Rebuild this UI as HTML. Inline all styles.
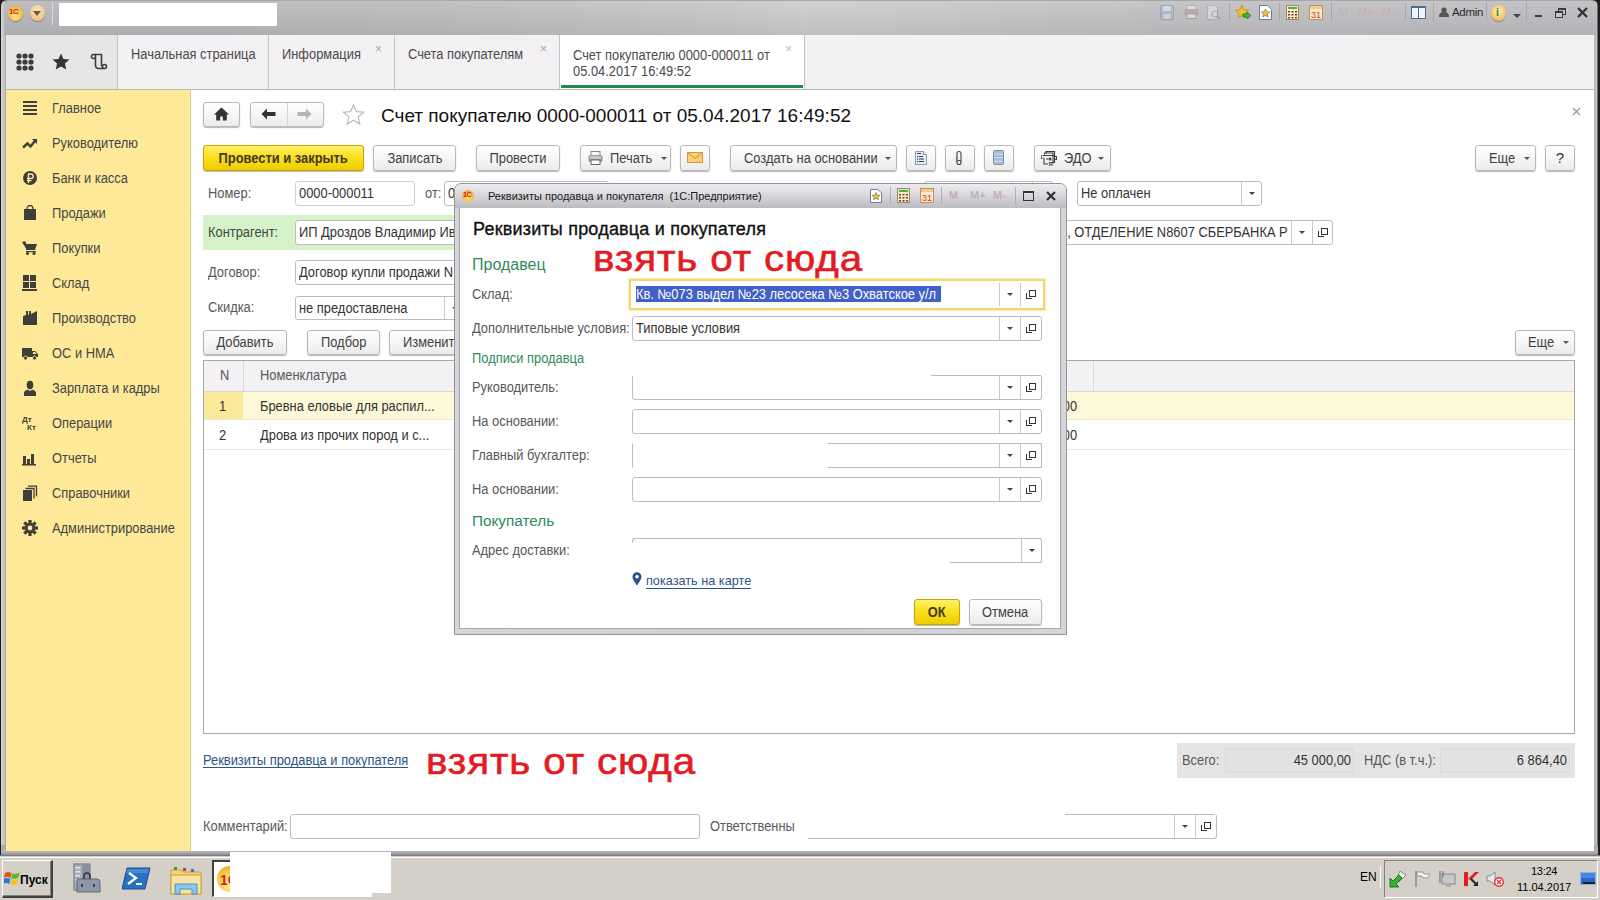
<!DOCTYPE html>
<html><head><meta charset="utf-8">
<style>
*,*:before,*:after{box-sizing:border-box;margin:0;padding:0}
html,body{width:1600px;height:900px;overflow:hidden;background:#1e1e1e;font-family:"Liberation Sans",sans-serif;font-size:13px;color:#333}
.a{position:absolute}
.t{position:absolute;white-space:nowrap;line-height:15px}
.btn{position:absolute;border:1px solid #b9b9b9;border-radius:3px;background:linear-gradient(#ffffff,#f4f4f4 60%,#ebebeb);box-shadow:0 1px 1px rgba(0,0,0,.28);color:#404040;text-align:center;white-space:nowrap;line-height:22px}
.inp{position:absolute;border:1px solid #bdbdbd;border-radius:3px;background:#fff;white-space:nowrap;line-height:22px;padding-left:3px;color:#333}
.dd{position:absolute;top:0;bottom:0;border-left:1px solid #c8c8c8;width:21px}
.dd:after{content:"";position:absolute;left:7px;top:10px;border-left:3.5px solid transparent;border-right:3.5px solid transparent;border-top:3.5px solid #444}
.op{position:absolute;top:0;bottom:0;border-left:1px solid #c8c8c8;width:21px}
.op:after{content:"";position:absolute;left:8px;top:7px;width:7px;height:7px;border:1.4px solid #333;background:#fff}
.op:before{content:"";position:absolute;left:5px;top:10px;width:6px;height:6px;border-left:1.4px solid #333;border-bottom:1.4px solid #333}
.lbl{position:absolute;white-space:nowrap;color:#585858;line-height:15px}
.x{font-size:14px;transform:scaleX(.92);transform-origin:0 50%}
.xr{font-size:14px;transform:scaleX(.92);transform-origin:100% 50%}
.s{display:inline-block;font-size:14px;transform:scaleX(.92);transform-origin:0 50%}
.sc{display:inline-block;font-size:14px;transform:scaleX(.92);transform-origin:50% 50%}
</style></head><body>
<!-- window frame -->
<div class="a" style="left:1px;top:0;width:1597px;height:857px;background:linear-gradient(90deg,#d0d0d4 0 2px,#c4c4c4 2px 4px,#a8a8a8 4px 1593px,#b8b8b8 1593px 1595px,#c8c8cc 1595px 1596px,#707070 1596px);border-radius:6px 6px 0 0"></div>
<div class="a" style="left:1px;top:845px;width:1597px;height:10px;background:linear-gradient(#a8a8ac,#b4b4b8 70%,#8c8c90)"></div>
<!-- title bar -->
<div class="a" id="titlebar" style="left:4px;top:1px;width:1593px;height:34px;border-radius:6px 6px 0 0;background:linear-gradient(rgba(255,255,255,.05),rgba(0,0,0,.07)),linear-gradient(90deg,#bababe 0%,#bdbdc0 25%,#c8c8cb 44%,#cecece 50%,#cbcbce 58%,#c4c4c7 68%,#c2c2c6 80%,#c0c0c4 100%)"></div>
<div class="a" style="left:59px;top:3px;width:218px;height:23px;background:#fff"></div>

<!-- tabs bar -->
<div class="a" style="left:6px;top:35px;width:1588px;height:55px;background:#f3f1f3;border-bottom:1px solid #b8b8b8"></div>
<div class="a" style="left:6px;top:35px;width:112px;height:54px;background:#e6e6e6;border-right:1px solid #c4c4c4"></div>


<!-- title bar icons -->
<div class="a" style="left:8px;top:6px;width:15px;height:15px;border-radius:50%;background:radial-gradient(circle at 50% 65%,#ffe680,#f3b640 70%,#d89a30);box-shadow:0 1px 1px rgba(0,0,0,.3)"></div>
<div class="t" style="left:9px;top:7px;font:bold 8px 'Liberation Sans';color:#d0201a;letter-spacing:-0.5px">1C</div>
<div class="a" style="left:30px;top:5px;width:15px;height:16px;border-radius:50%;background:radial-gradient(circle at 50% 35%,#fde4c0,#eec08a 75%,#c99a60);box-shadow:0 1px 1px rgba(0,0,0,.3)"></div>
<div class="a" style="left:33px;top:11px;border-left:4.5px solid transparent;border-right:4.5px solid transparent;border-top:5px solid #6b5a40"></div>
<div class="a" style="left:52px;top:3px;width:1px;height:22px;background:#b0b0b4;border-right:1px solid #dadade"></div>
<!-- faded icons -->
<svg class="a" style="left:1160px;top:5px;opacity:.55" width="14" height="15" viewBox="0 0 14 15"><rect x=".5" y=".5" width="13" height="14" rx="1" fill="#9fb4d0" stroke="#7a90b0"/><rect x="3" y="1" width="8" height="5" fill="#e8eef6"/><rect x="3.5" y="9" width="7" height="5" fill="#d8e0ea"/></svg>
<svg class="a" style="left:1184px;top:5px;opacity:.45" width="15" height="14" viewBox="0 0 15 14"><rect x="3" y=".5" width="9" height="4" fill="#fff" stroke="#999"/><rect x=".5" y="4" width="14" height="7" rx="1.5" fill="#b09090"/><rect x="3" y="9" width="9" height="4.5" fill="#fff" stroke="#888"/></svg>
<svg class="a" style="left:1207px;top:5px;opacity:.45" width="14" height="15" viewBox="0 0 14 15"><path d="M.5.5h7l3 3v11H.5z" fill="#eef0f4" stroke="#9aa0b0"/><circle cx="8" cy="9" r="3" fill="none" stroke="#8a8a9a" stroke-width="1.2"/><path d="M10 11l3 3" stroke="#8a6a6a" stroke-width="1.5"/></svg>
<div class="a" style="left:1229px;top:3px;width:1px;height:18px;background:#a8a8ac"></div>
<svg class="a" style="left:1235px;top:5px" width="17" height="16" viewBox="0 0 17 16"><path d="M7 0.5l2 4.2 4.5.5-3.4 3 1 4.5L7 10.5 3 12.7l1-4.5L0.5 5.2 5 4.7z" fill="#f4c430" stroke="#b88a10" stroke-width=".8"/><path d="M8 9h4V7l4 3.5-4 3.5v-2H8z" fill="#3ab83a" stroke="#1e7a1e" stroke-width=".8"/></svg>
<svg class="a" style="left:1259px;top:5px" width="13" height="15" viewBox="0 0 13 15"><path d="M.5.5h8l4 4v10H.5z" fill="#fff" stroke="#6a7ca0"/><path d="M6.5 4l1.3 2.7 2.9.3-2.2 2 .7 2.9-2.7-1.5-2.7 1.5.7-2.9-2.2-2 2.9-.3z" fill="#f0c040" stroke="#806020" stroke-width=".6"/></svg>
<div class="a" style="left:1279px;top:3px;width:1px;height:18px;background:#a8a8ac"></div>
<svg class="a" style="left:1286px;top:5px" width="13" height="15" viewBox="0 0 13 15"><rect x=".5" y=".5" width="12" height="14" fill="#fbe9c0" stroke="#a08860"/><rect x="2" y="2" width="9" height="2" fill="#4caf50"/><g fill="#5a4a30"><rect x="2" y="6" width="2" height="1.5"/><rect x="5.5" y="6" width="2" height="1.5"/><rect x="9" y="6" width="2" height="1.5"/><rect x="2" y="9" width="2" height="1.5"/><rect x="5.5" y="9" width="2" height="1.5"/><rect x="9" y="9" width="2" height="1.5"/><rect x="2" y="12" width="2" height="1.5"/><rect x="5.5" y="12" width="2" height="1.5"/><rect x="9" y="12" width="2" height="1.5"/></g></svg>
<svg class="a" style="left:1309px;top:5px" width="14" height="15" viewBox="0 0 14 15"><rect x=".5" y=".5" width="13" height="14" fill="#fbe9c8" stroke="#c09060"/><rect x="1" y="1" width="12" height="3" fill="#f0c890"/><text x="2" y="13" font-family="Liberation Sans" font-size="9" fill="#d04020">31</text></svg>
<div class="a" style="left:1331px;top:3px;width:1px;height:18px;background:#a8a8ac"></div>
<div class="t" style="left:1339px;top:6px;font:bold 11px 'Liberation Sans';color:#c4b4b4">M</div>
<div class="t" style="left:1358px;top:6px;font:bold 11px 'Liberation Sans';color:#c4b4b4">M+</div>
<div class="t" style="left:1382px;top:6px;font:bold 11px 'Liberation Sans';color:#c4b4b4">M-</div>
<div class="a" style="left:1405px;top:3px;width:1px;height:18px;background:#a8a8ac"></div>
<div class="a" style="left:1411px;top:6px;width:15px;height:13px;border:1.5px solid #4a6a98;border-top-width:2px;background:linear-gradient(90deg,#f0f4fa 44%,#4a6a98 44%,#4a6a98 56%,#f0f4fa 56%)"></div>
<div class="a" style="left:1433px;top:3px;width:1px;height:18px;background:#a8a8ac"></div>
<svg class="a" style="left:1439px;top:7px" width="10" height="10" viewBox="0 0 10 10"><circle cx="5" cy="3" r="2.6" fill="#555"/><path d="M0 10c0-4 2-5 5-5s5 1 5 5z" fill="#555"/></svg>
<div class="t" style="left:1452px;top:6px;font:11.5px 'Liberation Sans';color:#2a2a2a;letter-spacing:-0.3px">Admin</div>
<div class="a" style="left:1486px;top:3px;width:1px;height:18px;background:#a8a8ac"></div>
<div class="a" style="left:1491px;top:5px;width:15px;height:16px;border-radius:50%;background:radial-gradient(circle at 50% 40%,#fff0c0,#f0c060 70%,#c89030);box-shadow:0 1px 1px rgba(0,0,0,.3)"></div>
<div class="t" style="left:1496px;top:6px;font:bold 11px 'Liberation Sans';color:#3a8a10">i</div>
<div class="a" style="left:1513px;top:14px;border-left:4px solid transparent;border-right:4px solid transparent;border-top:4px solid #444"></div>
<div class="a" style="left:1526px;top:3px;width:1px;height:18px;background:#a8a8ac"></div>
<div class="a" style="left:1535px;top:15px;width:7px;height:2px;background:#3a3a3a"></div>
<div class="a" style="left:1558px;top:8px;width:8px;height:7px;border:1.5px solid #3a3a3a;border-top-width:2.5px"></div>
<div class="a" style="left:1555px;top:11px;width:8px;height:7px;border:1.5px solid #3a3a3a;border-top-width:2.5px;background:#c6c6ca"></div>
<svg class="a" style="left:1577px;top:7px" width="11" height="11" viewBox="0 0 11 11"><path d="M1 1L10 10M10 1L1 10" stroke="#333" stroke-width="2.4"/></svg>

<!-- tabs icons -->
<svg class="a" style="left:16px;top:53px" width="18" height="18" viewBox="0 0 18 18"><g fill="#3c3c3c"><circle cx="3" cy="3" r="2.6"/><circle cx="9" cy="3" r="2.6"/><circle cx="15" cy="3" r="2.6"/><circle cx="3" cy="9" r="2.6"/><circle cx="9" cy="9" r="2.6"/><circle cx="15" cy="9" r="2.6"/><circle cx="3" cy="15" r="2.6"/><circle cx="9" cy="15" r="2.6"/><circle cx="15" cy="15" r="2.6"/></g></svg>
<svg class="a" style="left:52px;top:53px" width="18" height="17" viewBox="0 0 18 17"><path d="M9 0.5l2.5 5.6 6 .5-4.6 4 1.4 6L9 13.4 3.7 16.6l1.4-6-4.6-4 6-.5z" fill="#333"/></svg>
<svg class="a" style="left:90px;top:53px" width="18" height="18" viewBox="0 0 18 18"><g fill="none" stroke="#3c3c3c" stroke-width="1.6"><path d="M3.5 1.5h8v12"/><circle cx="3.5" cy="3.5" r="2" fill="#fff"/><path d="M5.5 4.5v8a3 3 0 0 0 3 3h6"/><circle cx="14.5" cy="13.5" r="2" fill="#fff"/></g></svg>

<!-- tabs -->
<div class="a" style="left:268px;top:35px;width:1px;height:54px;background:#c4c4c4"></div>
<div class="a" style="left:394px;top:35px;width:1px;height:54px;background:#c4c4c4"></div>
<div class="a" style="left:559px;top:35px;width:246px;height:54px;background:#fff;border-left:1px solid #c4c4c4;border-right:1px solid #c4c4c4"></div>
<div class="a" style="left:561px;top:85px;width:242px;height:3px;background:#1d8a4e"></div>
<div class="t x" style="left:131px;top:47px;color:#4a4a4a">Начальная страница</div>
<div class="t x" style="left:282px;top:47px;color:#4a4a4a">Информация</div>
<div class="t x" style="left:408px;top:47px;color:#4a4a4a">Счета покупателям</div>
<div class="t x" style="left:573px;top:47px;color:#4a4a4a;line-height:16px">Счет покупателю 0000-000011 от<br>05.04.2017 16:49:52</div>
<div class="t" style="left:375px;top:42px;color:#a8a8a8;font-size:12px">×</div>
<div class="t" style="left:540px;top:42px;color:#a8a8a8;font-size:12px">×</div>
<div class="t" style="left:785px;top:42px;color:#c0c0c0;font-size:12px">×</div>

<!-- sidebar -->
<div class="a" style="left:6px;top:90px;width:185px;height:761px;background:#fee998;border-right:1px solid #d8c888"></div>
<svg class="a" style="left:22px;top:100px" width="16" height="16" viewBox="0 0 16 16"><g fill="#3f3f3a"><rect x="1" y="1" width="14" height="2"/><rect x="1" y="5" width="14" height="2"/><rect x="1" y="9" width="14" height="2"/><rect x="1" y="13" width="14" height="2"/></g></svg>
<div class="t x" style="left:52px;top:101px;color:#464646">Главное</div>
<svg class="a" style="left:22px;top:135px" width="16" height="16" viewBox="0 0 16 16"><path d="M1 12.5l4.5-4 3 3L13 6" fill="none" stroke="#3f3f3a" stroke-width="2.4"/><path d="M10 4h5v5z" fill="#3f3f3a"/></svg>
<div class="t x" style="left:52px;top:136px;color:#464646">Руководителю</div>
<svg class="a" style="left:22px;top:170px" width="16" height="16" viewBox="0 0 16 16"><circle cx="8" cy="8" r="7" fill="#3f3f3a"/><path d="M6.5 13V4h2.5a2.2 2.2 0 0 1 0 4.4H5 M5 10.5h4.5" fill="none" stroke="#fee998" stroke-width="1.4"/></svg>
<div class="t x" style="left:52px;top:171px;color:#464646">Банк и касса</div>
<svg class="a" style="left:22px;top:205px" width="16" height="16" viewBox="0 0 16 16"><path d="M2 4h12v11H2z" fill="#3f3f3a"/><path d="M5 6V3.5a3 3 0 0 1 6 0V6" fill="none" stroke="#3f3f3a" stroke-width="1.3"/></svg>
<div class="t x" style="left:52px;top:206px;color:#464646">Продажи</div>
<svg class="a" style="left:22px;top:240px" width="16" height="16" viewBox="0 0 16 16"><path d="M0 2h3l1 2h11l-2 6H5z" fill="#3f3f3a"/><path d="M1 2.2h2.2L5 10" fill="none" stroke="#3f3f3a" stroke-width="1.3"/><rect x="4" y="11" width="10" height="1.2" fill="#3f3f3a"/><circle cx="5.5" cy="13.5" r="1.6" fill="#3f3f3a"/><circle cx="12" cy="13.5" r="1.6" fill="#3f3f3a"/></svg>
<div class="t x" style="left:52px;top:241px;color:#464646">Покупки</div>
<svg class="a" style="left:22px;top:275px" width="16" height="16" viewBox="0 0 16 16"><g fill="#3f3f3a"><rect x="1" y="0" width="6" height="6"/><rect x="8" y="0" width="6" height="6"/><rect x="1" y="7" width="6" height="6"/><rect x="8" y="7" width="6" height="6"/><rect x="0" y="14" width="15" height="2"/></g></svg>
<div class="t x" style="left:52px;top:276px;color:#464646">Склад</div>
<svg class="a" style="left:22px;top:310px" width="16" height="16" viewBox="0 0 16 16"><path d="M1 15V6l3-1V1h2v4l1-.5V1h2v3l6-3v14z" fill="#3f3f3a"/></svg>
<div class="t x" style="left:52px;top:311px;color:#464646">Производство</div>
<svg class="a" style="left:22px;top:345px" width="16" height="16" viewBox="0 0 16 16"><path d="M0 3h10v9H0z M10 6h3l3 3v3h-6z" fill="#3f3f3a"/><path d="M11 7h2l1.5 2H11z" fill="#fee998"/><circle cx="3.5" cy="13" r="2" fill="#3f3f3a" stroke="#fee998" stroke-width=".8"/><circle cx="12.5" cy="13" r="2" fill="#3f3f3a" stroke="#fee998" stroke-width=".8"/></svg>
<div class="t x" style="left:52px;top:346px;color:#464646">ОС и НМА</div>
<svg class="a" style="left:22px;top:380px" width="16" height="16" viewBox="0 0 16 16"><ellipse cx="8" cy="5" rx="3.3" ry="4.3" fill="#3f3f3a"/><path d="M2 16v-3c0-2 2-3 4-3.3l2 1.3 2-1.3c2 .3 4 1.3 4 3.3v3z" fill="#3f3f3a"/></svg>
<div class="t x" style="left:52px;top:381px;color:#464646">Зарплата и кадры</div>
<svg class="a" style="left:22px;top:415px" width="16" height="16" viewBox="0 0 16 16"><text x="0" y="7" font-family="Liberation Sans" font-weight="bold" font-size="8" fill="#3f3f3a">Дт</text><text x="5" y="15" font-family="Liberation Sans" font-weight="bold" font-size="8" fill="#3f3f3a">Кт</text></svg>
<div class="t x" style="left:52px;top:416px;color:#464646">Операции</div>
<svg class="a" style="left:22px;top:450px" width="16" height="16" viewBox="0 0 16 16"><g fill="#3f3f3a"><rect x="1" y="6" width="3" height="8"/><rect x="5" y="9" width="3" height="5"/><rect x="9" y="4" width="3" height="10"/><rect x="0" y="14" width="14" height="1.5"/></g></svg>
<div class="t x" style="left:52px;top:451px;color:#464646">Отчеты</div>
<svg class="a" style="left:22px;top:485px" width="16" height="16" viewBox="0 0 16 16"><path d="M1 5h9v11H1z" fill="#3f3f3a"/><path d="M3.5 3.5h8.5v10 M6 1.2h8.5v10" fill="none" stroke="#3f3f3a" stroke-width="1.3"/></svg>
<div class="t x" style="left:52px;top:486px;color:#464646">Справочники</div>
<svg class="a" style="left:22px;top:520px" width="16" height="16" viewBox="0 0 16 16"><g transform="translate(8 8)"><circle r="5.2" fill="#3f3f3a"/><g fill="#3f3f3a"><rect x="-1.6" y="-8" width="3.2" height="16"/><rect x="-1.6" y="-8" width="3.2" height="16" transform="rotate(45)"/><rect x="-1.6" y="-8" width="3.2" height="16" transform="rotate(90)"/><rect x="-1.6" y="-8" width="3.2" height="16" transform="rotate(135)"/></g><circle r="2.4" fill="#fee998"/></g></svg>
<div class="t x" style="left:52px;top:521px;color:#464646">Администрирование</div>
<!-- main -->
<div class="a" style="left:191px;top:90px;width:1403px;height:761px;background:#fff"></div>

<!-- header nav -->
<div class="btn" style="left:203px;top:102px;width:37px;height:25px"></div>
<svg class="a" style="left:214px;top:107px" width="15" height="14" viewBox="0 0 15 14"><path d="M7.5 0.5L0 7.5h2.2V13.5h4V9.5h2.6v4h4V7.5H15z" fill="#333"/></svg>
<div class="btn" style="left:250px;top:102px;width:74px;height:25px"></div>
<div class="a" style="left:287px;top:103px;width:1px;height:23px;background:#d4d4d4"></div>
<svg class="a" style="left:261px;top:108px" width="15" height="12" viewBox="0 0 15 12"><path d="M0.5 6L6 0.5V4h8.5v4H6v3.5z" fill="#333"/></svg>
<svg class="a" style="left:297px;top:108px" width="15" height="12" viewBox="0 0 15 12"><path d="M14.5 6L9 0.5V4H0.5v4H9v3.5z" fill="#b4b4b4"/></svg>
<svg class="a" style="left:342px;top:104px" width="23" height="22" viewBox="0 0 23 22"><path d="M11.5 1l2.9 6.6 7.1.6-5.4 4.7 1.6 7-6.2-3.7-6.2 3.7 1.6-7L1.5 8.2l7.1-.6z" fill="none" stroke="#b8b8b8" stroke-width="1.2"/></svg>
<div class="t" style="left:381px;top:105px;font-size:19px;line-height:22px;color:#111">Счет покупателю 0000-000011 от 05.04.2017 16:49:52</div>
<svg class="a" style="left:1572px;top:107px" width="9" height="9" viewBox="0 0 9 9"><path d="M1 1l7 7M8 1L1 8" stroke="#9a9a9a" stroke-width="1.4"/></svg>

<!-- command bar -->
<div class="btn" style="left:203px;top:145px;width:161px;height:26px;background:linear-gradient(#fff06a,#fbe020 45%,#f0cc00);border-color:#c8a400;font-weight:bold;color:#3d3a1e;line-height:24px"><span class="sc">Провести и закрыть</span></div>
<div class="btn" style="left:373px;top:145px;width:83px;height:26px;line-height:24px"><span class="sc">Записать</span></div>
<div class="btn" style="left:476px;top:145px;width:84px;height:26px;line-height:24px"><span class="sc">Провести</span></div>
<div class="btn" style="left:580px;top:145px;width:91px;height:26px;line-height:24px;text-align:left;padding-left:29px"><span class="s">Печать</span></div>
<svg class="a" style="left:588px;top:151px" width="15" height="14" viewBox="0 0 15 14"><rect x="3" y="0.5" width="9" height="4" fill="#f4f4f4" stroke="#888"/><rect x="0.5" y="4" width="14" height="7" rx="1.5" fill="#9a9a9a"/><rect x="2" y="5" width="11" height="3" fill="#c8c8c8"/><rect x="3" y="9" width="9" height="4.5" fill="#fff" stroke="#666"/></svg>
<div class="a" style="left:661px;top:157px;border-left:3px solid transparent;border-right:3px solid transparent;border-top:3px solid #555"></div>
<div class="btn" style="left:680px;top:145px;width:30px;height:26px"></div>
<svg class="a" style="left:687px;top:152px" width="16" height="11" viewBox="0 0 16 11"><rect x=".5" y=".5" width="15" height="10" fill="#f6d07a" stroke="#d89a30"/><path d="M.5.5L8 6.5 15.5.5" fill="none" stroke="#d08a20"/></svg>
<div class="btn" style="left:730px;top:145px;width:167px;height:26px;line-height:24px;text-align:left;padding-left:13px"><span class="s">Создать на основании</span></div>
<div class="a" style="left:885px;top:157px;border-left:3px solid transparent;border-right:3px solid transparent;border-top:3px solid #555"></div>
<div class="btn" style="left:906px;top:145px;width:30px;height:26px"></div>
<svg class="a" style="left:914px;top:150px" width="14" height="16" viewBox="0 0 14 16"><path d="M1.5 1.5h8l3 3v10h-11z" fill="#e4eef8" stroke="#8a98aa"/><path d="M9.5 1.5v3h3" fill="#fff" stroke="#8a98aa"/><g fill="#2a3a50"><rect x="3" y="3" width="4" height="1"/><rect x="3" y="6" width="1.2" height="1.2"/><rect x="5" y="6" width="4" height="1"/><rect x="3" y="8.5" width="1.2" height="1.2"/><rect x="5" y="8.5" width="5" height="1"/><rect x="3" y="11" width="1.2" height="1.2"/><rect x="5" y="11" width="5" height="1"/></g></svg>
<div class="btn" style="left:945px;top:145px;width:30px;height:26px"></div>
<svg class="a" style="left:954px;top:150px" width="10" height="16" viewBox="0 0 10 16"><path d="M3 12V3.5a2 2 0 0 1 4 0V12" fill="none" stroke="#444" stroke-width="1.1"/><circle cx="5" cy="12.5" r="2" fill="#fff" stroke="#444" stroke-width="1.1"/><path d="M2.5 6v6" stroke="#777" stroke-width="1.2"/></svg>
<div class="btn" style="left:984px;top:145px;width:30px;height:26px"></div>
<svg class="a" style="left:993px;top:150px" width="12" height="16" viewBox="0 0 12 16"><rect x=".5" y=".5" width="10" height="14" rx="1.5" fill="#8aaacc" stroke="#7890a8"/><g fill="#dfe8f2"><rect x="1" y="3.5" width="9" height="1.2"/><rect x="1" y="7" width="9" height="1.2"/><rect x="1" y="10.5" width="9" height="1.2"/></g><g fill="#a8c0da"><rect x="1" y="1" width="9" height="2"/><rect x="1" y="5" width="9" height="1.5"/><rect x="1" y="8.5" width="9" height="1.5"/><rect x="1" y="12" width="9" height="2"/></g></svg>
<div class="btn" style="left:1034px;top:145px;width:77px;height:26px;line-height:24px;text-align:left;padding-left:29px"><span class="s">ЭДО</span></div>
<svg class="a" style="left:1041px;top:150px" width="16" height="16" viewBox="0 0 16 16"><g fill="none" stroke="#3a3a3a" stroke-width="1.1"><path d="M5 3V1.5h8.5v11H12"/><path d="M3.5 4.5V3h8.5v10.5"/><path d="M2 5.5h11.5v4"/><path d="M1.5 5.5a1.5 1.5 0 0 0 0 3"/><path d="M14 6.5h1.5v3H14"/><path d="M3 7.5v6.5h4"/><path d="M5 9h5M8.5 7.5l1.5 1.5-1.5 1.5"/></g><text x="7.5" y="15.5" font-family="Liberation Sans" font-weight="bold" font-size="6" fill="#3a3a3a">Я</text></svg>
<div class="a" style="left:1098px;top:157px;border-left:3px solid transparent;border-right:3px solid transparent;border-top:3px solid #555"></div>
<div class="btn" style="left:1475px;top:145px;width:61px;height:26px;line-height:24px;text-align:left;padding-left:13px"><span class="s">Еще</span></div>
<div class="a" style="left:1524px;top:157px;border-left:3px solid transparent;border-right:3px solid transparent;border-top:3px solid #555"></div>
<div class="btn" style="left:1545px;top:145px;width:30px;height:26px;line-height:24px;font-size:15px;color:#333">?</div>

<!-- fields -->
<div class="lbl x" style="left:208px;top:186px">Номер:</div>
<div class="inp" style="left:295px;top:181px;width:120px;height:25px;border-color:#d0d0d0"><span class="s">0000-000011</span></div>
<div class="lbl x" style="left:425px;top:186px">от:</div>
<div class="inp" style="left:444px;top:181px;width:165px;height:25px"><span class="s">0</span></div>
<div class="inp" style="left:924px;top:181px;width:129px;height:25px"><div class="dd" style="left:86px"></div><div class="op" style="left:107px"></div></div>
<div class="inp" style="left:1077px;top:181px;width:185px;height:25px"><span class="s">Не оплачен</span><div class="dd" style="left:163px"></div></div>

<div class="a" style="left:203px;top:215px;width:260px;height:35px;background:#d5f2c8"></div>
<div class="lbl x" style="left:208px;top:225px;color:#3e4a3e">Контрагент:</div>
<div class="inp" style="left:295px;top:220px;width:180px;height:25px"><span class="s">ИП Дроздов Владимир Иванович</span></div>
<div class="inp" style="left:900px;top:220px;width:433px;height:25px"><div class="a" style="left:0;top:0;width:389px;height:23px;overflow:hidden;text-align:right;padding-right:2px"><span class="s" style="transform-origin:100% 50%">, ОТДЕЛЕНИЕ N8607 СБЕРБАНКА Р</span></div><div class="dd" style="left:390px"></div><div class="op" style="left:411px"></div></div>
<div class="lbl x" style="left:208px;top:265px">Договор:</div>
<div class="inp" style="left:295px;top:260px;width:180px;height:25px"><span class="s">Договор купли продажи N 1</span></div>
<div class="lbl x" style="left:208px;top:300px">Скидка:</div>
<div class="inp" style="left:295px;top:296px;width:180px;height:24px"><span class="s">не предоставлена</span><div class="dd" style="left:148px"></div></div>

<div class="btn" style="left:203px;top:330px;width:84px;height:25px;line-height:23px"><span class="sc">Добавить</span></div>
<div class="btn" style="left:307px;top:330px;width:73px;height:25px;line-height:23px"><span class="sc">Подбор</span></div>
<div class="btn" style="left:389px;top:330px;width:90px;height:25px;line-height:23px;text-align:left;padding-left:13px"><span class="s">Изменить</span></div>
<div class="btn" style="left:1515px;top:330px;width:60px;height:25px;line-height:23px;text-align:left;padding-left:12px"><span class="s">Еще</span></div>
<div class="a" style="left:1563px;top:341px;border-left:3px solid transparent;border-right:3px solid transparent;border-top:3px solid #555"></div>

<!-- table -->
<div class="a" style="left:203px;top:360px;width:1372px;height:374px;border:1px solid #a8a8a8;background:#fff"></div>
<div class="a" style="left:204px;top:361px;width:1370px;height:31px;background:#f3f1f4;border-bottom:1px solid #d8d8d8"></div>
<div class="a" style="left:243px;top:361px;width:1px;height:30px;background:#dadada"></div>
<div class="a" style="left:1093px;top:361px;width:1px;height:30px;background:#dadada"></div>
<div class="a" style="left:204px;top:392px;width:1370px;height:28px;background:#fdf8d8;border-bottom:1px solid #ece8d0"></div>
<div class="a" style="left:204px;top:392px;width:39px;height:27px;background:#fbe99a"></div>
<div class="a" style="left:204px;top:449px;width:1370px;height:1px;background:#e8e8e8"></div>
<div class="lbl x" style="left:220px;top:368px">N</div>
<div class="lbl x" style="left:260px;top:368px">Номенклатура</div>
<div class="t x" style="left:219px;top:399px;color:#333">1</div>
<div class="t x" style="left:260px;top:399px;color:#333">Бревна еловые для распил...</div>
<div class="t x" style="left:219px;top:428px;color:#333">2</div>
<div class="t x" style="left:260px;top:428px;color:#333">Дрова из прочих пород и с...</div>
<div class="t x" style="left:1052px;top:399px;color:#333">0,00</div>
<div class="t x" style="left:1052px;top:428px;color:#333">0,00</div>

<!-- footer -->
<div class="t x" style="left:203px;top:753px;color:#2a5587;border-bottom:1px solid #2a5587;line-height:14px">Реквизиты продавца и покупателя</div>
<div class="t" style="left:426px;top:739px;font:37px 'Liberation Sans';line-height:46px;color:#e31c24;-webkit-text-stroke:0.6px #e31c24;transform:scaleX(1.09);transform-origin:0 0;letter-spacing:0.8px">взять от сюда</div>
<div class="a" style="left:1177px;top:743px;width:398px;height:35px;background:#e4e4e4"></div>
<div class="lbl x" style="left:1182px;top:753px">Всего:</div>
<div class="a" style="left:1225px;top:748px;width:129px;height:25px;border:1px solid #dadada;background:#e2e2e2"></div>
<div class="t xr" style="left:1225px;top:753px;width:126px;text-align:right;color:#333">45 000,00</div>
<div class="lbl x" style="left:1364px;top:753px">НДС (в т.ч.):</div>
<div class="a" style="left:1440px;top:748px;width:130px;height:25px;border:1px solid #dadada;background:#e2e2e2"></div>
<div class="t xr" style="left:1440px;top:753px;width:127px;text-align:right;color:#333">6 864,40</div>

<div class="lbl x" style="left:203px;top:819px">Комментарий:</div>
<div class="inp" style="left:290px;top:814px;width:410px;height:25px"></div>
<div class="lbl x" style="left:710px;top:819px">Ответственны</div>
<div class="inp" style="left:807px;top:814px;width:410px;height:25px;border-left-color:transparent;border-top-color:transparent"><div class="a" style="left:257px;top:-1px;width:150px;height:1px;background:#bdbdbd"></div><div class="dd" style="left:366px"></div><div class="op" style="left:387px"></div></div>

<!-- DIALOG -->
<div class="a" style="left:454px;top:183px;width:613px;height:452px;border-radius:7px 7px 0 0;background:linear-gradient(90deg,#d6d6da,#cfcfd3 50%,#d6d6da);border:1px solid #949498"></div>
<div class="a" style="left:455px;top:184px;width:611px;height:24px;border-radius:6px 6px 0 0;background:linear-gradient(#ececf0,#dcdce0 40%,#bcbcc0)"></div>
<div class="a" style="left:459px;top:208px;width:602px;height:421px;background:#fff;border:1px solid #a8a8ac;border-top:none"></div>
<div class="a" style="left:462px;top:190px;width:12px;height:12px;border-radius:50%;background:radial-gradient(circle at 50% 65%,#ffe070,#f2b040 70%,#d09030)"></div>
<div class="t" style="left:463px;top:191px;font:bold 7px 'Liberation Sans';color:#d0201a;letter-spacing:-0.5px">1C</div>
<div class="t" style="left:488px;top:190px;font-size:11px;line-height:13px;color:#1a1a1a">Реквизиты продавца и покупателя&nbsp; (1С:Предприятие)</div>
<svg class="a" style="left:870px;top:189px" width="12" height="14" viewBox="0 0 12 14"><path d="M.5.5h7.5l3.5 3.5v9.5H.5z" fill="#fff" stroke="#6a7ca0"/><path d="M6 3.5l1.2 2.5 2.7.3-2 1.8.6 2.7L6 9.4l-2.5 1.4.6-2.7-2-1.8 2.7-.3z" fill="#f0c040" stroke="#806020" stroke-width=".6"/></svg>
<div class="a" style="left:890px;top:187px;width:1px;height:17px;background:#b0b0b4"></div>
<svg class="a" style="left:897px;top:188px" width="13" height="15" viewBox="0 0 13 15"><rect x=".5" y=".5" width="12" height="14" fill="#fbe9c0" stroke="#a08860"/><rect x="2" y="2" width="9" height="2" fill="#4caf50"/><g fill="#5a4a30"><rect x="2" y="6" width="2" height="1.5"/><rect x="5.5" y="6" width="2" height="1.5"/><rect x="9" y="6" width="2" height="1.5"/><rect x="2" y="9" width="2" height="1.5"/><rect x="5.5" y="9" width="2" height="1.5"/><rect x="9" y="9" width="2" height="1.5"/><rect x="2" y="12" width="2" height="1.5"/><rect x="5.5" y="12" width="2" height="1.5"/><rect x="9" y="12" width="2" height="1.5"/></g></svg>
<svg class="a" style="left:920px;top:188px" width="14" height="15" viewBox="0 0 14 15"><rect x=".5" y=".5" width="13" height="14" fill="#fbe9c8" stroke="#c09060"/><rect x="1" y="1" width="12" height="3" fill="#f0c890"/><text x="2" y="13" font-family="Liberation Sans" font-size="9" fill="#d04020">31</text></svg>
<div class="a" style="left:941px;top:187px;width:1px;height:17px;background:#b0b0b4"></div>
<div class="t" style="left:949px;top:189px;font:bold 11px 'Liberation Sans';color:#c4b0b0">M</div>
<div class="t" style="left:970px;top:189px;font:bold 11px 'Liberation Sans';color:#c4b0b0">M+</div>
<div class="t" style="left:993px;top:189px;font:bold 11px 'Liberation Sans';color:#c4b0b0">M-</div>
<div class="a" style="left:1015px;top:187px;width:1px;height:17px;background:#b0b0b4"></div>
<div class="a" style="left:1023px;top:191px;width:11px;height:10px;border:1.3px solid #333;border-top-width:2.5px"></div>
<svg class="a" style="left:1046px;top:191px" width="10" height="10" viewBox="0 0 10 10"><path d="M1 1L9 9M9 1L1 9" stroke="#333" stroke-width="2.2"/></svg>

<div class="t" style="left:473px;top:219px;font-size:18px;line-height:20px;color:#111;letter-spacing:0.2px;-webkit-text-stroke:0.35px #111">Реквизиты продавца и покупателя</div>
<div class="t" style="left:472px;top:256px;font-size:16px;line-height:18px;color:#2f8a5c">Продавец</div>
<div class="t" style="left:593px;top:236px;font:37px 'Liberation Sans';line-height:46px;color:#e31c24;-webkit-text-stroke:0.6px #e31c24;transform:scaleX(1.09);transform-origin:0 0;letter-spacing:0.8px">взять от сюда</div>

<div class="lbl x" style="left:472px;top:287px">Склад:</div>
<div class="a" style="left:629px;top:279px;width:416px;height:31px;border:2.5px solid #f0d870;box-shadow:0 0 1px 1px rgba(250,235,150,.7);background:#fff"></div>
<div class="a" style="left:632px;top:282px;width:410px;height:25px;background:#fff"><div class="a" style="left:4px;top:4px;width:305px;height:16px;background:#4160c8"></div><div class="t x" style="left:4px;top:5px;color:#fff">Кв. №073 выдел №23 лесосека №3 Охватское у/л</div><div class="dd" style="left:367px;top:1px;bottom:1px"></div><div class="op" style="left:388px;top:1px;bottom:1px"></div></div>

<div class="lbl x" style="left:472px;top:321px">Дополнительные условия:</div>
<div class="inp" style="left:632px;top:316px;width:410px;height:25px"><span class="s">Типовые условия</span><div class="dd" style="left:366px"></div><div class="op" style="left:387px"></div></div>
<div class="t x" style="left:472px;top:351px;color:#2f8a5c">Подписи продавца</div>

<div class="lbl x" style="left:472px;top:380px">Руководитель:</div>
<div class="inp" style="left:632px;top:375px;width:410px;height:25px;border-top-color:transparent"><div class="a" style="left:298px;top:-1px;width:110px;height:1px;background:#bdbdbd"></div><div class="dd" style="left:366px"></div><div class="op" style="left:387px"></div></div>
<div class="lbl x" style="left:472px;top:414px">На основании:</div>
<div class="inp" style="left:632px;top:409px;width:410px;height:25px"><div class="dd" style="left:366px"></div><div class="op" style="left:387px"></div></div>
<div class="lbl x" style="left:472px;top:448px">Главный бухгалтер:</div>
<div class="inp" style="left:632px;top:443px;width:410px;height:25px;border-top-color:transparent;border-bottom-color:transparent;border-radius:0 3px 3px 0"><div class="a" style="left:195px;top:-1px;width:214px;height:1px;background:#bdbdbd"></div><div class="a" style="left:195px;bottom:-1px;width:214px;height:1px;background:#bdbdbd"></div><div class="dd" style="left:366px"></div><div class="op" style="left:387px"></div></div>
<div class="lbl x" style="left:472px;top:482px">На основании:</div>
<div class="inp" style="left:632px;top:477px;width:410px;height:25px"><div class="dd" style="left:366px"></div><div class="op" style="left:387px"></div></div>
<div class="t" style="left:472px;top:512px;font-size:15.3px;line-height:17px;color:#2f8a5c">Покупатель</div>
<div class="lbl x" style="left:472px;top:543px">Адрес доставки:</div>
<div class="inp" style="left:632px;top:538px;width:410px;height:25px;border-bottom-color:transparent;border-left-color:transparent"><div class="a" style="left:-1px;top:-1px;width:4px;height:5px;border-left:1px solid #bdbdbd;border-top:1px solid #bdbdbd;border-radius:3px 0 0 0"></div><div class="a" style="left:317px;bottom:-1px;width:92px;height:1px;background:#bdbdbd"></div><div class="dd" style="left:388px"></div></div>
<svg class="a" style="left:632px;top:572px" width="10" height="14" viewBox="0 0 10 14"><path d="M5 13.5C2 9 .5 7 .5 4.7a4.5 4.5 0 0 1 9 0C9.5 7 8 9 5 13.5z" fill="#2a5590"/><circle cx="5" cy="4.7" r="1.8" fill="#fff"/></svg>
<div class="t" style="left:646px;top:574px;color:#2a5587;border-bottom:1px solid #2a5587;line-height:14px;font-size:12.7px">показать на карте</div>
<div class="btn" style="left:914px;top:599px;width:46px;height:26px;background:linear-gradient(#fff06a,#fbe020 45%,#f0cc00);border-color:#c8a400;font-weight:bold;color:#3d3a1e;line-height:24px"><span class="sc">ОК</span></div>
<div class="btn" style="left:969px;top:599px;width:73px;height:26px;line-height:24px"><span class="sc">Отмена</span></div>

<!-- taskbar -->
<div class="a" style="left:0;top:855px;width:1600px;height:45px;background:#d4d0c8;border-top:1px solid #7a7a7a"></div>
<div class="a" style="left:0;top:857px;width:1600px;height:1px;background:#fdfdfd"></div>
<!-- start button -->
<div class="a" style="left:2px;top:860px;width:51px;height:38px;background:#d4d0c8;border-top:1px solid #fff;border-left:1px solid #fff;border-right:2px solid #404040;border-bottom:2px solid #404040;box-shadow:inset -1px -1px 0 #808080"></div>
<svg class="a" style="left:4px;top:870px" width="16" height="16" viewBox="0 0 16 16"><path d="M1 3Q4 1 7.5 3L6.5 8Q3 6 0 8z" fill="#e8542a"/><path d="M8.3 3.2Q11.5 5 15.5 2.5L14.5 7.5Q11 10 7.3 8.3z" fill="#5cb82c"/><path d="M0 8.8Q3 7 6.3 9L5.3 14Q2 12 -1 14z" fill="#2a7ad8"/><path d="M7.2 9.2Q11 11 14.3 8.5L13.3 13.5Q10 16 6.2 14.2z" fill="#f8c020"/></svg>
<div class="t" style="left:20px;top:873px;font:bold 12px 'Liberation Sans';color:#000;letter-spacing:0px">Пуск</div>
<!-- quick launch -->
<svg class="a" style="left:73px;top:863px" width="30" height="32" viewBox="0 0 30 32"><rect x="1" y="1" width="16" height="26" fill="#a8b0b8" stroke="#6a7078"/><g fill="#e0e4e8"><rect x="2" y="4" width="5" height="1.5"/><rect x="2" y="8" width="5" height="1.5"/><rect x="2" y="12" width="5" height="1.5"/><rect x="2" y="16" width="5" height="1.5"/></g><rect x="9" y="2" width="7" height="24" fill="#8890a0"/><path d="M4 16h20a3 3 0 0 1 3 3v10H4z" fill="#8a98a8" stroke="#5a6878"/><path d="M11 16v-3a3 3 0 0 1 6 0v3" fill="none" stroke="#333" stroke-width="1.5"/><rect x="8" y="21" width="2" height="3" fill="#444"/><rect x="20" y="21" width="2" height="3" fill="#444"/></svg>
<svg class="a" style="left:122px;top:867px" width="29" height="23" viewBox="0 0 29 23"><path d="M5 1h23l-5 21H0z" fill="#2870c0" stroke="#1a4a90"/><path d="M5 2h22l-1 4H4z" fill="#5a9ae0" opacity=".6"/><path d="M7 6l7 5-8 6" fill="none" stroke="#fff" stroke-width="2.2"/><rect x="14" y="16" width="6" height="2" fill="#fff"/></svg>
<svg class="a" style="left:170px;top:866px" width="33" height="30" viewBox="0 0 33 30"><path d="M1 4h10l2 2h18v22H1z" fill="#f2d27a" stroke="#c8a040"/><rect x="4" y="1" width="3" height="3" fill="#3a9a3a"/><rect x="13" y="2" width="3" height="3" fill="#c04020"/><rect x="21" y="3" width="3" height="3" fill="#3a7ac0"/><path d="M1 9h30v19H1z" fill="#f8e4a0" stroke="#c8a040"/><path d="M5 28V18h22v10h-5v-5H10v5z" fill="#8ac8f0" stroke="#4a90c8"/></svg>
<!-- 1C task -->
<div class="a" style="left:212px;top:860px;width:160px;height:37px;background:#fff;border-top:2px solid #404040;border-left:2px solid #404040;border-bottom:1px solid #fff;border-right:1px solid #fff"></div>
<div class="a" style="left:217px;top:866px;width:25px;height:26px;border-radius:50%;background:radial-gradient(circle at 50% 70%,#fff4a0,#f4c040 65%,#d89a30)"></div>
<div class="t" style="left:220px;top:872px;font:bold 14px 'Liberation Sans';color:#e01a10">1C</div>
<div class="a" style="left:230px;top:852px;width:161px;height:41px;background:#fff"></div>
<!-- tray -->
<div class="t" style="left:1360px;top:870px;font:12px 'Liberation Sans';color:#000">EN</div>
<div class="a" style="left:1380px;top:866px;width:1px;height:22px;background:#808080;border-right:1px solid #fff"></div>
<div class="a" style="left:1384px;top:860px;width:214px;height:38px;border-top:1px solid #808080;border-left:1px solid #808080;border-bottom:1px solid #fff;border-right:1px solid #fff"></div>
<svg class="a" style="left:1389px;top:870px" width="18" height="18" viewBox="0 0 18 18"><path d="M11 1l6 4-7 7-3-2z" fill="#f0f0f0" stroke="#888"/><path d="M1 17V8l3 3 6-6 3 3-6 6 3 3z" fill="#3ab030" stroke="#1a7a1a"/></svg>
<svg class="a" style="left:1414px;top:870px" width="17" height="18" viewBox="0 0 17 18"><path d="M2 1v16" stroke="#888" stroke-width="1.5"/><path d="M3 2h6l1 2h6l-2 4h-5l-1-2H3z" fill="#f0f0f0" stroke="#999"/></svg>
<svg class="a" style="left:1438px;top:870px" width="18" height="18" viewBox="0 0 18 18"><rect x="4" y="4" width="13" height="10" fill="#c8c8c8" stroke="#888"/><rect x="8" y="14" width="5" height="3" fill="#aaa"/><path d="M2 1v12M5 1v6" stroke="#777" stroke-width="1.2"/></svg>
<svg class="a" style="left:1463px;top:871px" width="17" height="16" viewBox="0 0 17 16"><path d="M1 1h4v14H1z" fill="#e02020"/><path d="M5 8l7-7h4L8 9z" fill="#e02020"/><path d="M8 8l5 5" stroke="#222" stroke-width="2"/><path d="M10 15h5v-5z" fill="#222"/></svg>
<svg class="a" style="left:1486px;top:870px" width="18" height="18" viewBox="0 0 18 18"><path d="M1 6h3l5-4v13l-5-4H1z" fill="#e8e8e8" stroke="#888"/><circle cx="13" cy="12" r="4.3" fill="#fff" stroke="#e03030" stroke-width="1.4"/><path d="M11 10l4 4M15 10l-4 4" stroke="#e03030" stroke-width="1.4"/></svg>
<div class="t" style="left:1531px;top:865px;font:11px 'Liberation Sans';color:#000;letter-spacing:-0.3px">13:24</div>
<div class="t" style="left:1517px;top:881px;font:11px 'Liberation Sans';color:#000">11.04.2017</div>
<svg class="a" style="left:1580px;top:872px" width="16" height="14" viewBox="0 0 16 14"><rect x=".5" y=".5" width="15" height="12" fill="#2a6ad0" stroke="#8ab0e8"/><rect x="1" y="1" width="14" height="5" fill="#5a9af0" opacity=".6"/><rect x="3" y="10" width="12" height="2" fill="#222"/></svg>

</body></html>
